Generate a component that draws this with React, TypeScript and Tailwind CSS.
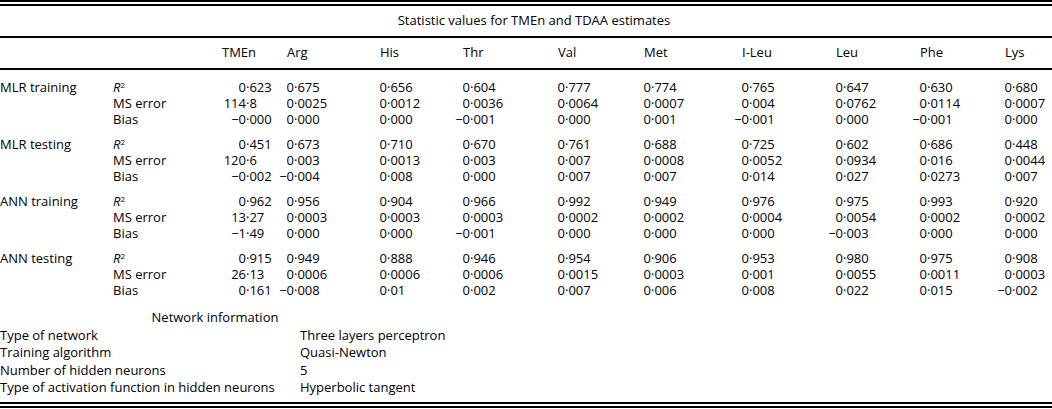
import React from "react";

const cols = ["TMEn", "Arg", "His", "Thr", "Val", "Met", "I-Leu", "Leu", "Phe", "Lys"];

const groups: { name: string; rows: string[][] }[] = [
  {
    name: "MLR training",
    rows: [
      ["0·623", "0·675", "0·656", "0·604", "0·777", "0·774", "0·765", "0·647", "0·630", "0·680"],
      ["114·8", "0·0025", "0·0012", "0·0036", "0·0064", "0·0007", "0·004", "0·0762", "0·0114", "0·0007"],
      ["−0·000", "0·000", "0·000", "−0·001", "0·000", "0·001", "−0·001", "0·000", "−0·001", "0·000"],
    ],
  },
  {
    name: "MLR testing",
    rows: [
      ["0·451", "0·673", "0·710", "0·670", "0·761", "0·688", "0·725", "0·602", "0·686", "0·448"],
      ["120·6", "0·003", "0·0013", "0·003", "0·007", "0·0008", "0·0052", "0·0934", "0·016", "0·0044"],
      ["−0·002", "−0·004", "0·008", "0·000", "0·007", "0·007", "0·014", "0·027", "0·0273", "0·007"],
    ],
  },
  {
    name: "ANN training",
    rows: [
      ["0·962", "0·956", "0·904", "0·966", "0·992", "0·949", "0·976", "0·975", "0·993", "0·920"],
      ["13·27", "0·0003", "0·0003", "0·0003", "0·0002", "0·0002", "0·0004", "0·0054", "0·0002", "0·0002"],
      ["−1·49", "0·000", "0·000", "−0·001", "0·000", "0·000", "0·000", "−0·003", "0·000", "0·000"],
    ],
  },
  {
    name: "ANN testing",
    rows: [
      ["0·915", "0·949", "0·888", "0·946", "0·954", "0·906", "0·953", "0·980", "0·975", "0·908"],
      ["26·13", "0·0006", "0·0006", "0·0006", "0·0015", "0·0003", "0·001", "0·0055", "0·0011", "0·0003"],
      ["0·161", "−0·008", "0·01", "0·002", "0·007", "0·006", "0·008", "0·022", "0·015", "−0·002"],
    ],
  },
];

const network = [
  ["Type of network", "Three layers perceptron"],
  ["Training algorithm", "Quasi-Newton"],
  ["Number of hidden neurons", "5"],
  ["Type of activation function in hidden neurons", "Hyperbolic tangent"],
];

// label | stat | one column per estimate; numbers line up on the decimal point
const grid = "grid grid-cols-[113px_107px_56px_93px_83px_95px_86px_98px_94px_84px_85px_1fr]";

const Num = ({ v, wide }: { v: string; wide: boolean }) => {
  const [int, frac] = v.split("·");
  return (
    <div className="whitespace-nowrap">
      <span className={`inline-block text-right ${wide ? "w-[26px]" : "w-[18px]"}`}>{int}</span>
      <span>·{frac}</span>
    </div>
  );
};

const Stat = ({ i }: { i: number }) => {
  if (i === 0)
    return (
      <div>
        <i>R</i>
        <sup className="text-[8px] leading-none">2</sup>
      </div>
    );
  return <div>{i === 1 ? "MS error" : "Bias"}</div>;
};

export default function App() {
  return (
    <div className="w-[1052px] h-[409px] bg-white text-black text-[13px] font-['Open_Sans',sans-serif]">
      <div className="border-t-2 border-black mb-[2px]" />
      <div className="border-t-2 border-black" />
      <div className="h-[30px] flex items-center justify-center pl-[16px]">
        Statistic values for TMEn and TDAA estimates
      </div>
      <div className="border-t-2 border-black" />
      <div className={`${grid} h-[30px] items-center`}>
        <div />
        <div />
        {cols.map((c, i) => (
          <div key={c} className={i === 0 ? "pl-[2px]" : "pl-[11px]"}>
            {c}
          </div>
        ))}
      </div>
      <div className="border-t-2 border-black" />
      {groups.map((g) => (
        <div key={g.name} className="pt-[9px]">
          {g.rows.map((r, i) => (
            <div key={i} className={`${grid} h-4 leading-4`}>
              <div>{i === 0 ? g.name : ""}</div>
              <Stat i={i} />
              {r.map((v, j) => (
                <Num key={j} v={v} wide={j === 0} />
              ))}
            </div>
          ))}
        </div>
      ))}
      <div className="pt-[11px]">
        <div className="grid grid-cols-[300px_1fr] h-[17.5px] leading-[17.5px]">
          <div className="text-center pl-[130px]">Network information</div>
        </div>
        {network.map(([a, b]) => (
          <div key={a} className="grid grid-cols-[300px_1fr] h-[17.5px] leading-[17.5px]">
            <div>{a}</div>
            <div>{b}</div>
          </div>
        ))}
      </div>
      <div className="mt-[5.5px] border-t-2 border-black mb-[2px]" />
      <div className="border-t-2 border-black" />
    </div>
  );
}
